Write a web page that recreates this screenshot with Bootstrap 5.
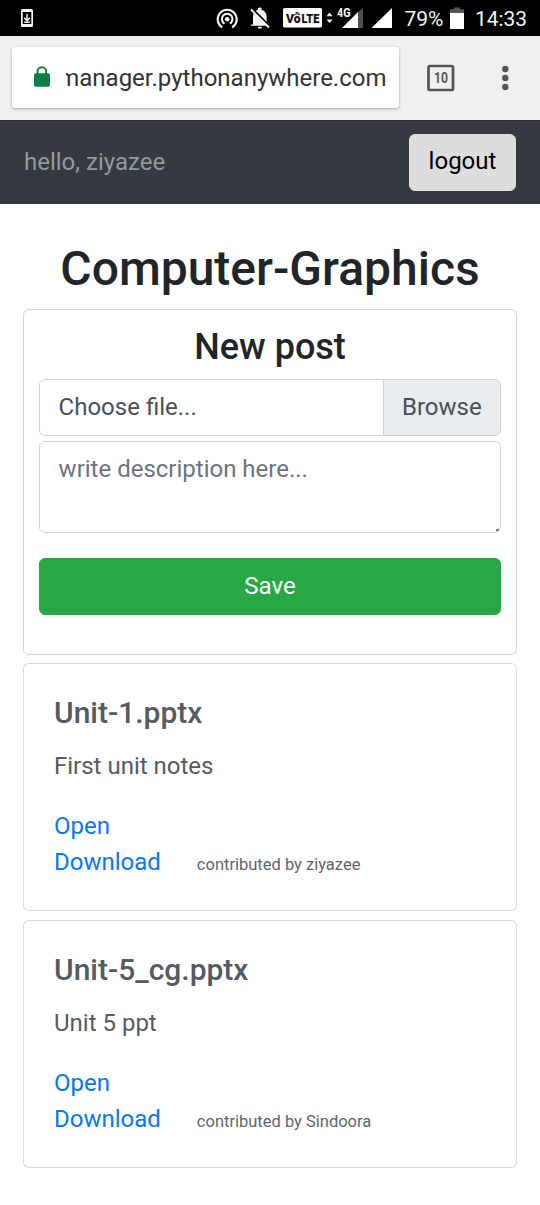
<!DOCTYPE html>
<html lang="en">
<head>
<meta charset="utf-8">
<meta name="viewport" content="width=device-width, initial-scale=1">
<title>Computer-Graphics</title>
<link href="https://cdn.jsdelivr.net/npm/bootstrap@5.3.0/dist/css/bootstrap.min.css" rel="stylesheet">
<style>
html{font-size:24px;overflow:hidden}
body{font-family:Roboto,sans-serif;color:#212529;background:#fff;min-height:1205px}
.status-strip{height:36px;background:#000}
.status-strip svg,.browser-strip svg{display:block;flex:none}
.browser-strip{height:84px;background:#f0f0f1;padding:0 0 0 12px}
.address{width:387px;height:61px;margin-top:-1px;background:#fff;border-radius:3px;box-shadow:0 1px 3px rgba(0,0,0,.3);padding-left:21px}
.address-text{width:321px;margin-left:14.5px;font-size:24px;color:#333;line-height:36px;overflow:hidden;direction:rtl;white-space:nowrap}
.site-nav{height:84px;background:#343a40;border-top:1px solid #262b31;padding:0 24px 1px}
.site-nav .navbar-text{color:#94989d;padding:0 0 1px}
.btn{border-radius:6px;border-width:1.5px;height:57px;padding:0 18px 1px;font-size:24px;line-height:36px}
.btn-logout,.btn-logout:hover{background:#ddd;border-color:#ddd;color:#000;width:107px;padding-bottom:2px}
.btn-save,.btn-save:hover{background:#28a745;border-color:#28a745;color:#fff}
.page{padding:36px 23px 0}
h1{font-size:48px;line-height:57.6px;margin-bottom:11.4px}
h2{font-size:36px;line-height:43px;margin:1px 0 10px}
h5{font-size:30px;line-height:36px;margin:1px 0 17px}
.card{border:1.5px solid rgba(0,0,0,.14);border-radius:6px;margin-bottom:8.5px;background:#fff}
.card-form{height:346px;padding:15px;border-color:#d3d4d5}
.form-control,.input-group-text{border:1.5px solid #ced4da;border-radius:6px;font-size:24px;line-height:36px;padding:9px 18px 9px 18.6px;color:#495057}
.input-group{height:57px;margin-bottom:5px}
.input-group-text{background:#e9ecef;width:118px;padding:9px 18px}
textarea.form-control{display:block;height:92px;min-height:0;resize:none}
textarea.form-control::placeholder{color:#6c757d}
.description-field{margin-bottom:25px}
.size-grip{position:absolute;right:2px;bottom:2px;width:3px;height:2px;background:#66696c;transform:rotate(-25deg)}
.card-post{height:248px;padding:30px;color:#545b62}
.card-post p{margin-bottom:24px}
.card-post a{color:#0779ee;text-decoration:none}
.card-post .contributor{font-size:16.5px;margin-left:36px;color:#5f656b}
</style>
</head>
<body>
<header>
  <div class="status-strip d-flex">
    <svg width="540" height="36" viewBox="0 0 540 36" role="img" aria-label="Phone status">
      <rect x="21" y="9" width="12" height="18" rx="1.5" fill="#f4f4f4"/>
      <rect x="22.7" y="12" width="8.6" height="12" fill="#000"/>
      <path d="M27 14v6M24.2 17.800 27 20.700l2.800-2.900M24.200 22.200h5.600" fill="none" stroke="#f4f4f4" stroke-width="1.500"/>
      <g fill="none" stroke="#f4f4f4" stroke-width="2.100">
        <path d="M222.300 27.400a9.500 9.500 0 1 1 9.800 0"/>
        <path d="M224.500 23.600a5.300 5.300 0 1 1 5.400 0"/>
      </g>
      <circle cx="227.200" cy="19.300" r="2.300" fill="#f4f4f4"/>
      <path d="M253 24.500v-7.500c0-4 2-6.500 5-7.200v-.9c0-2 3.600-2 3.600 0v.9c3.300.8 5 3.400 5 7.200v5l2.500 2.500v1.200h-18.200v-1.200zM257.600 26.800h4.400c0 2.600-4.400 2.600-4.400 0z" fill="#f4f4f4"/>
      <path d="M253 9.500 270.500 27" stroke="#000" stroke-width="2"/>
      <path d="M251 9.500 269 27.500" stroke="#f4f4f4" stroke-width="1.900"/>
      <rect x="283" y="8" width="39" height="19.500" rx="1.500" fill="#fff"/>
      <g fill="#111" font-family="Roboto, sans-serif" font-weight="900">
        <text x="286" y="23" font-size="12" textLength="14.500" lengthAdjust="spacingAndGlyphs">Vo</text>
        <text x="301.500" y="23" font-size="12" textLength="18" lengthAdjust="spacingAndGlyphs">LTE</text>
      </g>
      <path d="M294 15.500q2-3 5-1M295.500 12.800q3-1.500 4.500 2" fill="none" stroke="#111" stroke-width="1"/>
      <path d="M326.500 16.200 329.500 12.500l3 3.700zM326.500 19.500h6l-3 3.600z" fill="#f4f4f4"/>
      <path d="M342 28 358 12v16z" fill="#fff"/>
      <path d="M358 12 363 8v20h-5z" fill="#505050"/>
      <text x="337" y="17" font-family="Roboto, sans-serif" font-weight="700" font-size="12.500" fill="#fff" stroke="#000" stroke-width="2" paint-order="stroke" textLength="13.500" lengthAdjust="spacingAndGlyphs">4G</text>
      <path d="M371.500 28 392 8v20z" fill="#fff"/>
      <text x="404.500" y="26" font-family="Roboto, sans-serif" font-size="21" fill="#f4f4f4" textLength="39" lengthAdjust="spacingAndGlyphs">79%</text>
      <path d="M454 7.500h6v1.800h4v4h-14v-4h4z" fill="#555"/>
      <path d="M450 13h14v16h-14z" fill="#fff"/>
      <text x="475" y="26" font-family="Roboto, sans-serif" font-size="21" fill="#f4f4f4" textLength="52" lengthAdjust="spacingAndGlyphs">14:33</text>
    </svg>
  </div>
  <div class="browser-strip d-flex align-items-center">
    <div class="address d-flex align-items-center">
      <svg width="18" height="24" viewBox="0 0 18 24"><path d="M4.500 9V5.500a4.300 4.300 0 0 1 8.600 0V9" fill="none" stroke="#0b8043" stroke-width="2"/><rect x="1" y="7.300" width="16" height="13.500" rx="1.700" fill="#0b8043"/></svg>
      <div class="address-text">manager.pythonanywhere.com</div>
    </div>
    <svg width="141" height="60" viewBox="399 48 141 60" aria-label="10 open tabs, menu">
      <rect x="428.500" y="66" width="24.500" height="24" rx="1.500" fill="none" stroke="#555" stroke-width="2.700"/>
      <text x="434" y="83" font-family="Roboto, sans-serif" font-size="14.500" font-weight="700" fill="#555" textLength="14" lengthAdjust="spacingAndGlyphs">10</text>
      <g fill="#555"><circle cx="505.300" cy="69" r="3.200"/><circle cx="505.300" cy="78" r="3.200"/><circle cx="505.300" cy="87" r="3.200"/></g>
    </svg>
  </div>
</header>
<nav class="site-nav d-flex align-items-center justify-content-between">
  <span class="navbar-text">hello, ziyazee</span>
  <button class="btn btn-logout" type="button">logout</button>
</nav>
<main class="page">
  <h1 class="text-center">Computer-Graphics</h1>
  <form class="card card-form">
    <h2 class="text-center">New post</h2>
    <div class="input-group flex-nowrap">
      <div class="form-control">Choose file...</div>
      <span class="input-group-text">Browse</span>
    </div>
    <div class="description-field position-relative">
      <textarea class="form-control" placeholder="write description here..."></textarea>
      <span class="size-grip"></span>
    </div>
    <button class="btn btn-save w-100" type="button">Save</button>
  </form>
  <article class="card card-post">
    <h5>Unit-1.pptx</h5>
    <p>First unit notes</p>
    <div><a href="#">Open</a></div>
    <div class="d-flex align-items-baseline"><a href="#">Download</a><span class="contributor">contributed by ziyazee</span></div>
  </article>
  <article class="card card-post">
    <h5>Unit-5_cg.pptx</h5>
    <p>Unit 5 ppt</p>
    <div><a href="#">Open</a></div>
    <div class="d-flex align-items-baseline"><a href="#">Download</a><span class="contributor">contributed by Sindoora</span></div>
  </article>
</main>
<script src="https://cdn.jsdelivr.net/npm/bootstrap@5.3.0/dist/js/bootstrap.bundle.min.js"></script>
</body>
</html>
